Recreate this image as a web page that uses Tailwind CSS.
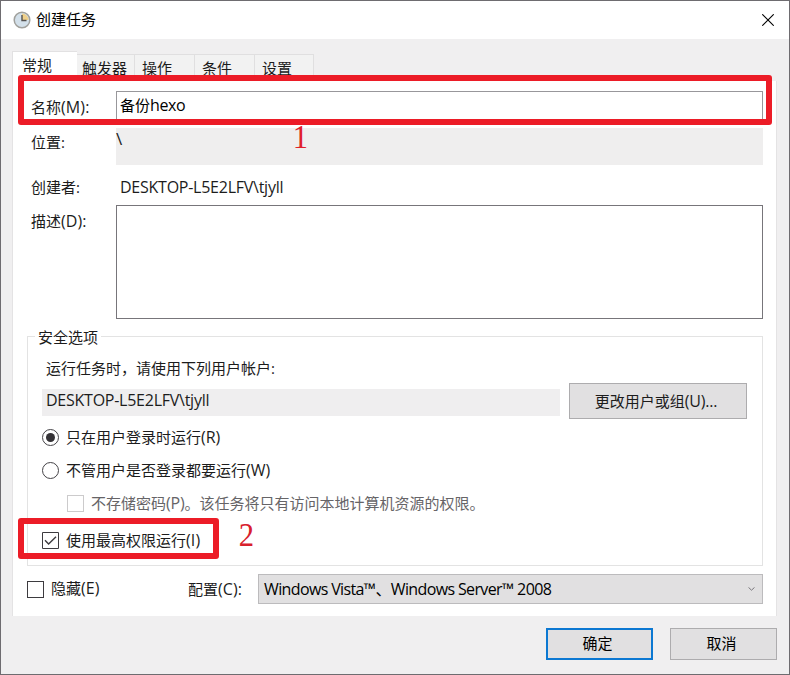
<!DOCTYPE html>
<html lang="zh-CN">
<head>
<meta charset="utf-8">
<title>创建任务</title>
<script src="https://cdn.jsdelivr.net/npm/@tailwindcss/browser@4"></script>
</head>
<body class="overflow-hidden">
<div class="relative flex h-[675px] w-[790px] flex-col border border-[#6e6c70] bg-[#f0eff0] font-['Open_Sans','Noto_Sans_CJK_SC',sans-serif] text-[15px] leading-[18px] text-[#1c1c1c] whitespace-nowrap">
  <header class="flex h-[38px] shrink-0 items-center bg-white pl-3 pr-[15px] text-black">
    <svg class="h-[18px] w-[18px]" viewBox="0 0 18 18" fill="none"><circle cx="9" cy="9" r="7.8" fill="#d3e0ea" stroke="#a0a09c" stroke-width="1.5"/><path d="M9 2.5A6.5 6.5 0 0 1 15.5 9H9Z" fill="#efd08a"/><path d="M9 4v5.5h4.5" stroke="#55524f" stroke-width="1.4"/></svg>
    <h1 class="ml-[5px] pb-[2px]">创建任务</h1>
    <svg class="ml-auto h-3 w-3" viewBox="0 0 12 12" fill="none" stroke="#000" stroke-width="1.1"><path d="M.3.3 11.7 11.7M11.7.3.3 11.7"/></svg>
  </header>

  <nav class="flex h-[42px] shrink-0 items-end pl-[11px]">
    <div class="h-[30px] w-[65px] border-l border-t border-[#e2e1e2] bg-white pl-[9px] pt-[4px]">常规</div>
    <div class="h-[27px] w-[58px] border-r border-t border-[#e0dfe0] bg-[#f2f2f2] pl-[5px] pt-[4px]">触发器</div>
    <div class="h-[27px] w-[60px] border-r border-t border-[#e0dfe0] bg-[#f2f2f2] pl-[7px] pt-[4px]">操作</div>
    <div class="h-[27px] w-[60px] border-r border-t border-[#e0dfe0] bg-[#f2f2f2] pl-[7px] pt-[4px]">条件</div>
    <div class="h-[27px] w-[59px] border-r border-t border-[#e0dfe0] bg-[#f2f2f2] pl-[7px] pt-[4px]">设置</div>
  </nav>

  <main class="ml-[11px] flex h-[535px] w-[765px] shrink-0 flex-col border-x border-[#e4e3e4] bg-white pl-[14px] pr-[13px] pt-[10px]">
    <div class="flex h-[37px] pl-[4px]">
      <label class="w-[85px] pt-[7px]">名称<span class="text-[16px] tracking-[0.1px]">(M):</span></label>
      <div class="h-[31px] w-[647px] border border-[#98979b] pl-[3px] pt-[4px] text-black">备份<span class="text-[16px] tracking-[-0.4px]">hexo</span></div>
    </div>
    <div class="flex h-[50px] pl-[4px]">
      <label class="w-[85px] pt-[5px]">位置:</label>
      <div class="h-[37px] w-[647px] bg-[#efeeee] pt-[2px] text-[17px]">\</div>
    </div>
    <div class="flex h-[27px] pl-[4px]">
      <label class="w-[85px]">创建者:</label>
      <div class="pl-[4px] text-[16px] tracking-[-0.25px]">DESKTOP-L5E2LFV\tjyll</div>
    </div>
    <div class="flex h-[131px] pl-[4px]">
      <label class="w-[85px] pt-[7px]">描述<span class="text-[16px] tracking-[0.1px]">(D):</span></label>
      <div class="h-[114px] w-[647px] border border-[#77757a]"></div>
    </div>

    <section class="flex h-[230px] w-[736px] shrink-0 flex-col border border-[#e3e3e3] pl-[14px]">
      <h2 class="-ml-[7px] -mt-[9px] h-[31px] w-[68px] pl-[3px]"><span class="-ml-[3px] inline-block bg-white px-[3px]">安全选项</span></h2>
      <p class="h-[24px] pl-[4px]">运行任务时，请使用下列用户帐户:</p>
      <div class="flex h-[45px]">
        <div class="mt-[6px] h-[27px] w-[518px] bg-[#efeeef] pl-[4px] pt-[2px] text-[16px] tracking-[-0.25px]">DESKTOP-L5E2LFV\tjyll</div>
        <button class="ml-[9px] h-[36px] w-[178px] border border-[#adacae] bg-[#e1e0e1] pb-px pr-[4px]">更改用户或组<span class="text-[16px] tracking-[-0.2px]">(U)...</span></button>
      </div>
      <div class="flex h-[18px] items-center">
        <span class="flex h-[17px] w-[17px] items-center justify-center rounded-full border border-[#454347]"><span class="h-[9px] w-[9px] rounded-full bg-[#343236]"></span></span>
        <span class="ml-[7px]">只在用户登录时运行<span class="text-[16px]">(R)</span></span>
      </div>
      <div class="mt-[15px] flex h-[18px] items-center">
        <span class="h-[17px] w-[17px] rounded-full border border-[#454347]"></span>
        <span class="ml-[7px]">不管用户是否登录都要运行<span class="text-[16px]">(W)</span></span>
      </div>
      <div class="mt-[15px] flex h-[18px] items-center pl-[25px] text-[#666467]">
        <span class="h-[17px] w-[17px] border border-[#cccbcc]"></span>
        <span class="ml-[7px]">不存储密码<span class="text-[16px] tracking-[-0.2px]">(P)</span>。该任务将只有访问本地计算机资源的权限。</span>
      </div>
      <div class="mt-[19px] flex h-[18px] items-center">
        <svg class="h-[17px] w-[17px]" viewBox="0 0 17 17" fill="none" stroke="#3d3b3f"><path d="M.5.5h16v16H.5Z"/><path d="m3 8.2 3.6 3.7L14 4.7" stroke-width="1.4"/></svg>
        <span class="ml-[7px]">使用最高权限运行<span class="text-[16px] tracking-[0.1px]">(I)</span></span>
      </div>
    </section>

    <div class="mt-[8px] flex h-[30px] w-[736px] items-center">
      <span class="h-[17px] w-[17px] border border-[#3d3b3f]"></span>
      <span class="ml-[7px] w-[137px] pb-[2px]">隐藏<span class="text-[16px]">(E)</span></span>
      <span class="w-[70px]">配置<span class="text-[16px] tracking-[0.1px]">(C):</span></span>
      <div class="flex h-[30px] w-[505px] items-center border border-[#bcbbbd] bg-[#e1e0e1] pl-[5px] pr-[7px] text-black">
        <span class="text-[16px] tracking-[-0.63px]">Windows Vista™、Windows Server™ 2008</span>
        <svg class="ml-auto h-[4px] w-[7px]" viewBox="0 0 7 4" fill="none" stroke="#77757a"><path d="m.5.4 3 2.8 3-2.8"/></svg>
      </div>
    </div>
  </main>

  <footer class="mt-[12px] flex h-[32px] gap-[17px] pl-[545px]">
    <button class="h-[32px] w-[107px] border-2 border-[#0c78d2] bg-[#e1e0e1] pb-[2px] pr-[4px] text-black">确定</button>
    <button class="h-[32px] w-[107px] border border-[#adacae] bg-[#e1e0e1] pb-[2px] pr-[4px] text-black">取消</button>
  </footer>

  <div class="absolute left-[17px] top-[74px] h-[50px] w-[754px] rounded-[3px] border-[6px] border-[#ec1c27]"></div>
  <div class="absolute left-[17px] top-[517px] h-[41px] w-[201px] rounded-[3px] border-[6px] border-[#ec1c27]"></div>
  <div class="absolute left-[291px] top-[118px] scale-x-90 font-['Liberation_Serif',serif] text-[34px] leading-9 text-[#e0202a]">1</div>
  <div class="absolute left-[237px] top-[516px] scale-x-90 font-['Liberation_Serif',serif] text-[34px] leading-9 text-[#d8202c]">2</div>
</div>
</body>
</html>
